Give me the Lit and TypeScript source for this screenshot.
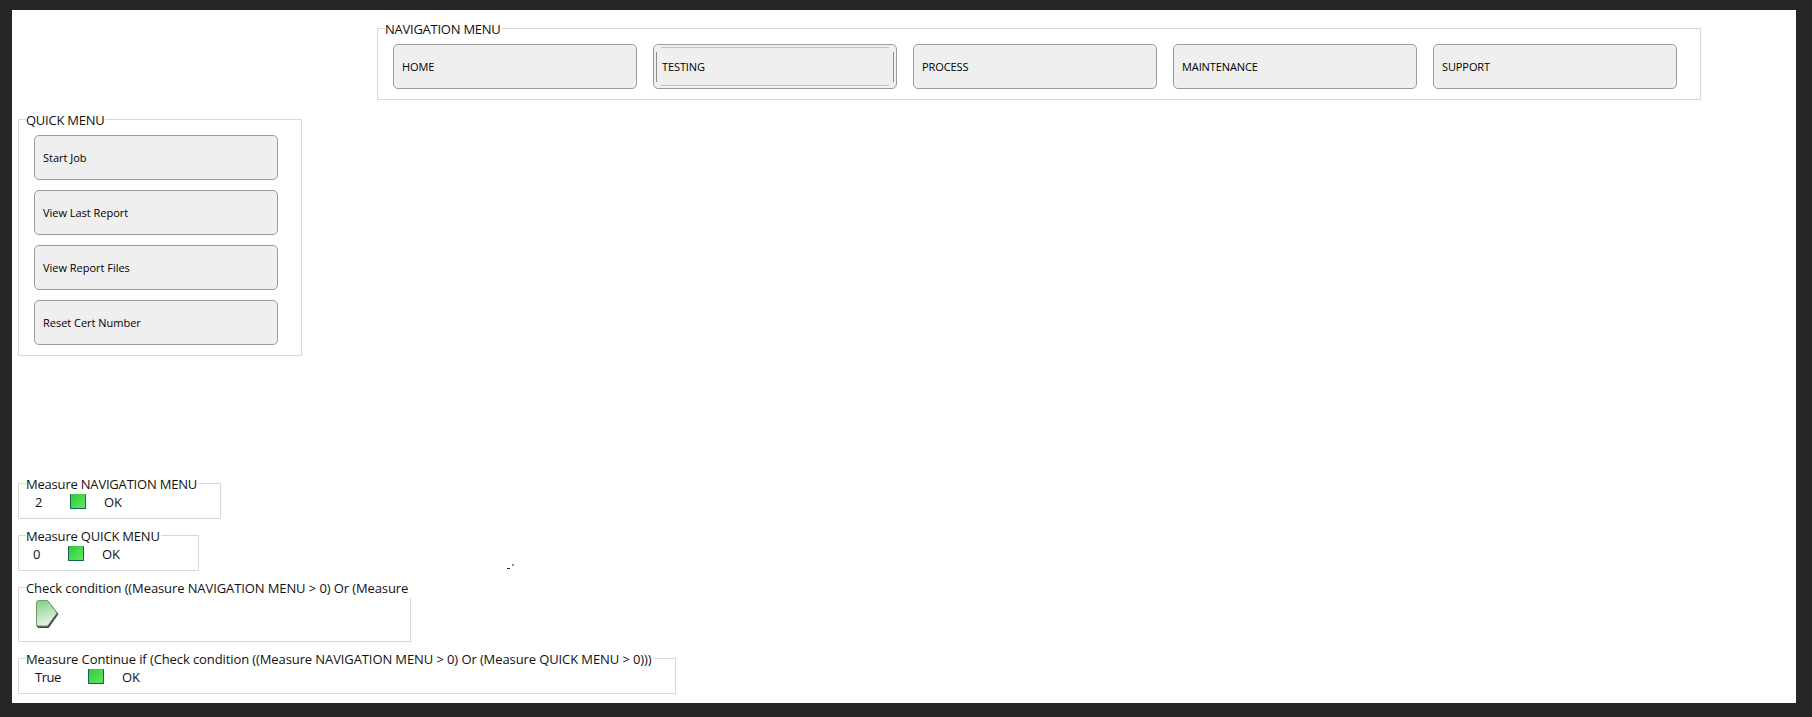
import { LitElement, html, css, svg } from "lit";
import { customElement } from "lit/decorators.js";

const NAV = ["HOME", "TESTING", "PROCESS", "MAINTENANCE", "SUPPORT"];
const QUICK = ["Start Job", "View Last Report", "View Report Files", "Reset Cert Number"];

@customElement("app-root")
export class AppRoot extends LitElement {
  static styles = css`
    :host {
      display: block;
      height: 717px;
      box-sizing: border-box;
      padding: 10px 16px 14px 12px;
      background: #262626;
      font-family: "Open Sans", "Noto Sans", sans-serif;
      color: #111;
    }
    .surface {
      position: relative;
      height: 693px;
      background: #fff;
      display: flex;
      flex-direction: column;
      align-items: flex-start;
      padding: 18px 0 0 6px;
      box-sizing: border-box;
    }
    .group {
      position: relative;
      box-sizing: border-box;
      border: 1px solid #d8d8d8;
    }
    .legend {
      position: absolute;
      top: -9px;
      left: 7px;
      white-space: nowrap;
      background: #fff;
      padding: 0 1px 0 0;
      font-size: 13px;
      letter-spacing: -0.2px;
      line-height: 19px;
    }
    .caps { letter-spacing: -0.25px; }
    .long { letter-spacing: -0.1px; }
    .m3 .legend { right: -1px; height: 19px; }
    .nav {
      margin-left: 359px;
      width: 1324px;
      height: 72px;
      padding: 15px;
      display: flex;
      gap: 16px;
    }
    .quick {
      margin-top: 19px;
      width: 284px;
      height: 237px;
      padding: 15px;
      display: flex;
      flex-direction: column;
      gap: 10px;
    }
    button {
      position: relative;
      box-sizing: border-box;
      width: 244px;
      height: 45px;
      flex: none;
      padding: 0 0 0 8px;
      text-align: left;
      font: 500 11px "Open Sans", "Noto Sans", sans-serif;
      color: #000;
      letter-spacing: -0.1px;
      background: #efefef;
      border: 1px solid #9c9c9c;
      border-radius: 5px;
    }
    .quick button { letter-spacing: -0.02px; }
    button.active::before,
    button.active::after {
      content: "";
      position: absolute;
      box-sizing: border-box;
    }
    button.active::before {
      left: 2px;
      right: 2px;
      top: 7px;
      bottom: 6px;
      border-left: 1px solid #8e8e8e;
      border-right: 1px solid #8e8e8e;
    }
    button.active::after {
      left: 7px;
      right: 7px;
      top: 2px;
      bottom: 2px;
      border-top: 1px solid #c2c2c2;
      border-bottom: 1px solid #bdbdbd;
      box-shadow: 0 1px 0 #fafafa;
    }
    .measure {
      box-sizing: border-box;
      display: flex;
      align-items: center;
      font-size: 13px;
      letter-spacing: -0.2px;
      line-height: 19px;
    }
    .m1 { margin-top: 127px; width: 203px; height: 36px; padding-left: 16px; }
    .m2 { margin-top: 16px; width: 181px; height: 36px; padding-left: 14px; }
    .m3 { margin-top: 16px; width: 393px; height: 55px; padding: 12px 0 0 16px; display: block; }
    .m4 { margin-top: 16px; width: 658px; height: 36px; padding-left: 16px; }
    .val, .ok { padding-top: 2px; }
    .val { width: 35px; flex: none; }
    .m4 .val { width: 53px; letter-spacing: -0.5px; }
    .swatch {
      box-sizing: border-box;
      width: 16px;
      height: 16px;
      flex: none;
      margin-right: 18px;
      border: 1px solid #12665a;
      background: linear-gradient(135deg, #2dcb38, #62e85c);
    }
    .arrow { display: block; width: 24px; height: 28px; }
    .speck { position: absolute; left: 494px; top: 552px; width: 10px; height: 8px; }
  `;

  render() {
    return html`<div class="surface">
      <div class="group nav">
        <div class="legend caps">NAVIGATION MENU</div>
        ${NAV.map((n) => html`<button class=${n === "TESTING" ? "active" : ""}>${n}</button>`)}
      </div>
      <div class="group quick">
        <div class="legend caps">QUICK MENU</div>
        ${QUICK.map((n) => html`<button>${n}</button>`)}
      </div>
      <div class="group measure m1">
        <div class="legend">Measure NAVIGATION MENU</div>
        <span class="val">2</span><span class="swatch"></span><span class="ok">OK</span>
      </div>
      <div class="group measure m2">
        <div class="legend">Measure QUICK MENU</div>
        <span class="val">0</span><span class="swatch"></span><span class="ok">OK</span>
      </div>
      <div class="group measure m3">
        <div class="legend long">Check condition ((Measure NAVIGATION MENU > 0) Or (Measure</div>
        <svg class="arrow" viewBox="0 0 24 28">
          <defs>
            <linearGradient id="g" x1="0" y1="0" x2="0.25" y2="1">
              <stop offset="0" stop-color="#7fcf82"></stop>
              <stop offset="1" stop-color="#e3f3e3"></stop>
            </linearGradient>
          </defs>
          <path d="M4 1.5H13L23 14L13.5 27.5H4Q2 27.5 2 25.5V3.5Q2 1.5 4 1.5Z" fill="#444" stroke="#444" stroke-width="1" stroke-linejoin="round"></path>
          <path d="M3.5 0.5H12.5L22 13L12.5 26H3.5Q1.5 26 1.5 24V2.5Q1.5 0.5 3.5 0.5Z" fill="url(#g)" stroke="#6f9a70" stroke-linejoin="round"></path>
        </svg>
      </div>
      <div class="group measure m4">
        <div class="legend long">Measure Continue if (Check condition ((Measure NAVIGATION MENU > 0) Or (Measure QUICK MENU > 0)))</div>
        <span class="val">True</span><span class="swatch"></span><span class="ok">OK</span>
      </div>
      <svg class="speck" viewBox="0 0 10 8">
        ${svg`<path d="M1 6.5H4M7 2V4" stroke="#222" stroke-width="1" fill="none"></path>`}
      </svg>
    </div>`;
  }
}
